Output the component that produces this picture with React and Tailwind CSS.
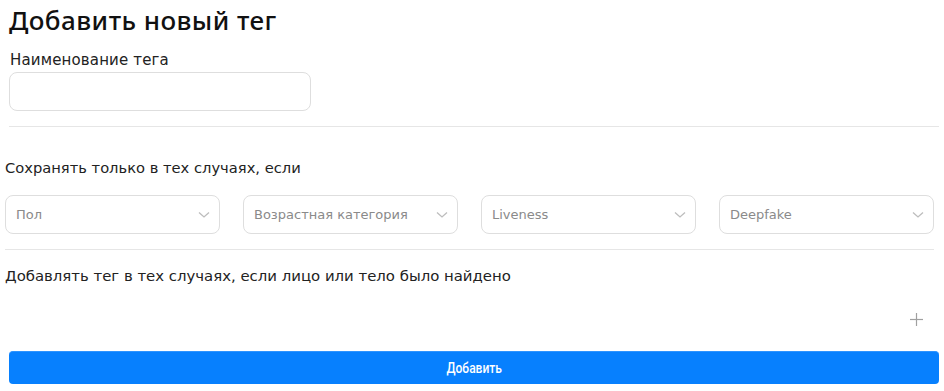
import React from "react";

const Chevron = () => (
  <svg width="12" height="8" viewBox="0 0 12 8" fill="none" className="shrink-0">
    <polyline points="1,1.5 6,6 11,1.5" stroke="#bdbdbd" strokeWidth="1.3" fill="none" />
  </svg>
);

const Select = ({ label }) => (
  <div className="w-[215px] h-[39px] border border-[#dedede] rounded-[8px] flex items-center justify-between pl-[10px] pr-[9px]">
    <span className="text-[13px] text-[#8a8a8a]">{label}</span>
    <Chevron />
  </div>
);

export default function App() {
  return (
    <div
      className="w-[944px] h-[391px] bg-white text-[#1a1a1a] px-[5px] flex flex-col"
      style={{ fontFamily: '"DejaVu Sans", "Noto Sans", sans-serif' }}
    >
      <div
        className="h-[40px] leading-[40px] text-[26px] tracking-[0.45px] font-medium pl-[4px] text-[#111]"
        style={{ fontFamily: '"Noto Sans", sans-serif' }}
      >
        Добавить новый тег
      </div>
      <div className="mt-[10px] leading-[20px] text-[15px] tracking-[0.15px] pl-[5px] text-[#222]">
        Наименование тега
      </div>
      <div className="mt-[2px] ml-[4px] w-[302px] h-[39px] border border-[#dedede] rounded-[8px]" />
      <div className="mt-[15px] ml-[4px] h-px bg-[#e6e6e6]" />
      <div className="mt-[31px] leading-[20px] text-[14.7px] text-[#222]">
        Сохранять только в тех случаях, если
      </div>
      <div className="mt-[17px] flex gap-[23px]">
        <Select label="Пол" />
        <Select label="Возрастная категория" />
        <Select label="Liveness" />
        <Select label="Deepfake" />
      </div>
      <div className="mt-[15px] h-px bg-[#e6e6e6] mr-[5px]" />
      <div className="mt-[16px] leading-[20px] text-[14.9px] text-[#222]">
        Добавлять тег в тех случаях, если лицо или тело было найдено
      </div>
      <div className="mt-[27px] flex justify-end pr-[16px]">
        <svg width="13" height="13" viewBox="0 0 13 13">
          <line x1="6.5" y1="0" x2="6.5" y2="13" stroke="#a0a0a0" strokeWidth="1.2" />
          <line x1="0" y1="6.5" x2="13" y2="6.5" stroke="#a0a0a0" strokeWidth="1.2" />
        </svg>
      </div>
      <div className="mt-[25px] ml-[4px] h-[33px] rounded-[4px] bg-[#0780fe] border-t border-[#2d93ff] flex items-center justify-center">
        <span
          className="text-white text-[14px] font-medium inline-block scale-x-[0.86]"
          style={{ fontFamily: '"Roboto", sans-serif' }}
        >
          Добавить
        </span>
      </div>
    </div>
  );
}
